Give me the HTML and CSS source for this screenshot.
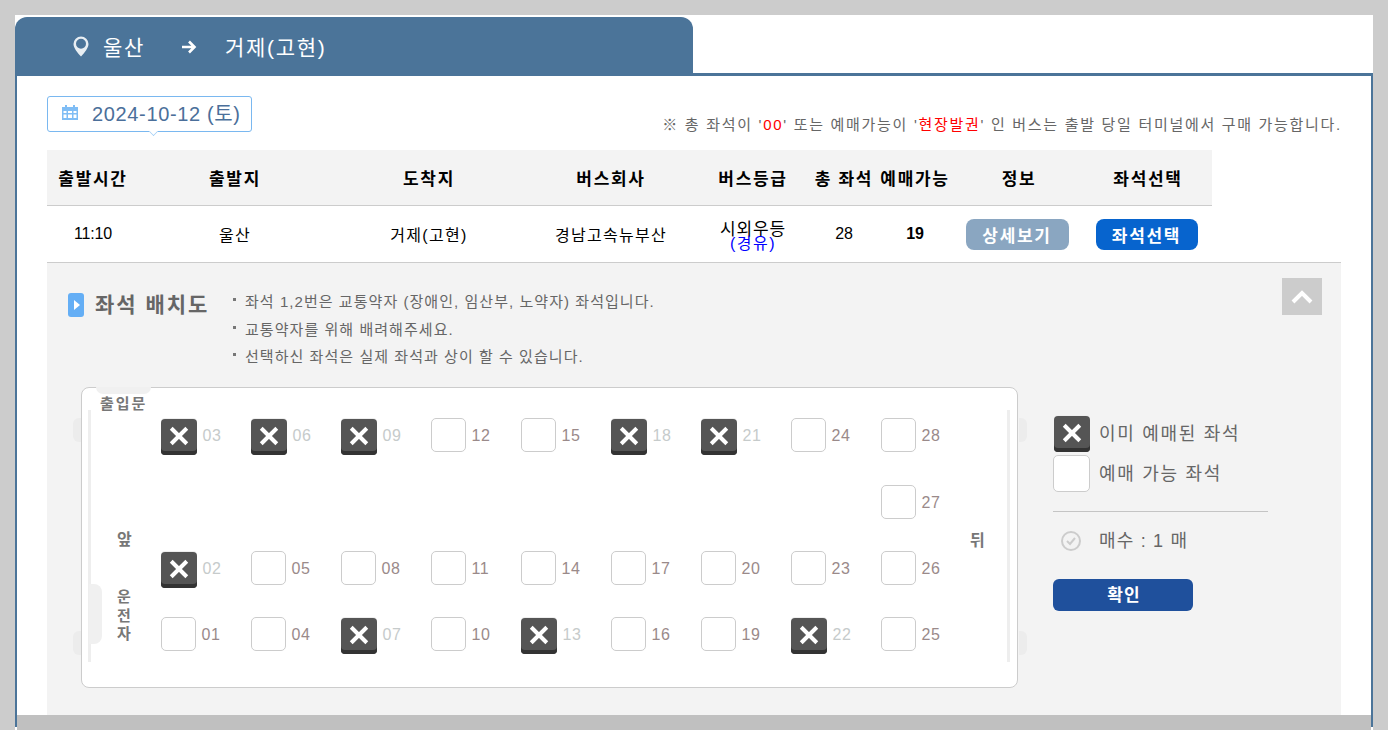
FILE: index.html
```html
<!DOCTYPE html>
<html lang="ko">
<head>
<meta charset="utf-8">
<title>좌석 선택</title>
<link rel="stylesheet" href="styles.css">
</head>
<body>
<div class="wrap">
  <div class="tab">
    <svg class="pin" viewBox="0 0 16 21" width="16" height="21"><path d="M8 .5a7.500 7.500 0 0 0-7.500 7.500c0 3.800 3.800 8.500 7.500 12.500 3.700-4 7.500-8.700 7.500-12.500A7.500 7.500 0 0 0 8 .5zm0 2.300a5 5 0 1 1 0 10 5 5 0 0 1 0-10z" fill="#e8eef3" fill-rule="evenodd"/></svg>
    <span class="tab-from">울산</span>
    <svg class="arrow" viewBox="0 0 15 14" width="15" height="14"><path d="M0 7h12.500M7 1.500L12.500 7 7 12.500" fill="none" stroke="#fff" stroke-width="2.600"/></svg>
    <span>거제(고현)</span>
  </div>
  <div class="panel">
    <div class="date-row">
      <div class="date">
        <svg class="cal" viewBox="0 0 16 16" width="16" height="16"><path d="M0 3h3V1h2v2h6V1h2v2h3v13H0zM1.500 7v2h3V7zm4.500 0v2h4V7zm5.500 0v2h3V7zm-10 3.500v3.500h3v-3.500zm4.500 0v3.500h4v-3.500zm5.500 0v3.500h3v-3.500z" fill="#7fbdf5" fill-rule="evenodd"/></svg>
        <span>2024-10-12 (토)</span>
      </div>
      <p class="note">※ 총 좌석이 '<em>00</em>' 또는 예매가능이 '<em>현장발권</em>' 인 버스는 출발 당일 터미널에서 구매 가능합니다.</p>
    </div>
    <div class="thead">
      <span>출발시간</span><span>출발지</span><span>도착지</span><span>버스회사</span><span>버스등급</span><span>총 좌석</span><span>예매가능</span><span>정보</span><span>좌석선택</span>
    </div>
    <div class="trow">
      <span class="num">11:10</span><span>울산</span><span>거제(고현)</span><span>경남고속뉴부산</span>
      <span class="grade">시외우등<b>(경유)</b></span>
      <span class="num">28</span><strong class="num">19</strong>
      <span><button class="btn btn-info">상세보기</button></span>
      <span><button class="btn btn-pick">좌석선택</button></span>
    </div>
    <div class="detail">
      <button class="up" aria-label="접기"><svg viewBox="0 0 22 14" width="22" height="14"><path d="M2 12l9-9 9 9" fill="none" stroke="#fff" stroke-width="4"/></svg></button>
      <div class="detail-head">
        <div class="h-icon"></div>
        <h2>좌석 배치도</h2>
        <ul>
          <li>좌석 1,2번은 교통약자 (장애인, 임산부, 노약자) 좌석입니다.</li>
          <li>교통약자를 위해 배려해주세요.</li>
          <li>선택하신 좌석은 실제 좌석과 상이 할 수 있습니다.</li>
        </ul>
      </div>
      <div class="detail-body">
        <div class="bus">
          <i class="door"></i>
          <i class="wheel wl wt"></i><i class="wheel wl wb"></i><i class="wheel wr wt"></i><i class="wheel wr wb"></i>
          <i class="rail rl"></i><i class="rail rr"></i>
          <i class="driver"></i>
          <span class="lab lab-door">출입문</span>
          <span class="lab lab-front">앞</span>
          <span class="lab lab-driver">운<br>전<br>자</span>
          <span class="lab lab-back">뒤</span>
          <div class="seats">
            <div class="seat off"><i class="x"></i><span>03</span></div>
            <div class="seat off"><i class="x"></i><span>06</span></div>
            <div class="seat off"><i class="x"></i><span>09</span></div>
            <div class="seat"><i class="box"></i><span>12</span></div>
            <div class="seat"><i class="box"></i><span>15</span></div>
            <div class="seat off"><i class="x"></i><span>18</span></div>
            <div class="seat off"><i class="x"></i><span>21</span></div>
            <div class="seat"><i class="box"></i><span>24</span></div>
            <div class="seat"><i class="box"></i><span>28</span></div>

            <i class="aisle"></i>
            <div class="seat"><i class="box"></i><span>27</span></div>

            <div class="seat off"><i class="x"></i><span>02</span></div>
            <div class="seat"><i class="box"></i><span>05</span></div>
            <div class="seat"><i class="box"></i><span>08</span></div>
            <div class="seat"><i class="box"></i><span>11</span></div>
            <div class="seat"><i class="box"></i><span>14</span></div>
            <div class="seat"><i class="box"></i><span>17</span></div>
            <div class="seat"><i class="box"></i><span>20</span></div>
            <div class="seat"><i class="box"></i><span>23</span></div>
            <div class="seat"><i class="box"></i><span>26</span></div>

            <div class="seat"><i class="box"></i><span>01</span></div>
            <div class="seat"><i class="box"></i><span>04</span></div>
            <div class="seat off"><i class="x"></i><span>07</span></div>
            <div class="seat"><i class="box"></i><span>10</span></div>
            <div class="seat off"><i class="x"></i><span>13</span></div>
            <div class="seat"><i class="box"></i><span>16</span></div>
            <div class="seat"><i class="box"></i><span>19</span></div>
            <div class="seat off"><i class="x"></i><span>22</span></div>
            <div class="seat"><i class="box"></i><span>25</span></div>
          </div>
        </div>
        <div class="legend">
          <div class="leg-row"><i class="x"></i><span>이미 예매된 좌석</span></div>
          <div class="leg-row leg-free"><i class="box"></i><span>예매 가능 좌석</span></div>
          <div class="count">
            <svg viewBox="0 0 22 22" width="22" height="22"><circle cx="11" cy="11" r="9" fill="none" stroke="#ccc" stroke-width="2"/><path d="M7 11l3 3 5-6" fill="none" stroke="#ccc" stroke-width="2"/></svg>
            <span>매수 : 1 매</span>
          </div>
          <button class="ok">확인</button>
        </div>
      </div>
    </div>
    <div class="band"></div>
  </div>
</div>
</body>
</html>
```
FILE: styles.css
```css
* { box-sizing: border-box; }
html, body { margin: 0; height: 730px; overflow: hidden; }
body {
  background: #cccccc;
  padding: 15px 15px 0;
  font-family: "Liberation Sans", "Noto Sans CJK KR", sans-serif;
  color: #000;
}
i, em { font-style: normal; }
button { font-family: inherit; border: 0; padding: 0; cursor: pointer; }

.wrap { width: 1358px; height: 715px; background: #fff; padding-top: 2px; overflow: hidden; }

.tab {
  width: 678px; height: 59px;
  margin-bottom: -3px;
  position: relative; z-index: 1;
  display: flex; align-items: center;
  padding: 0 0 2px 58px;
  background: #4b7499;
  border-radius: 12px 12px 0 0;
  color: #fff; font-size: 21px; letter-spacing: 1.700px;
}
.tab .pin { margin-right: 14px; margin-top: 1px; }
.tab .arrow { margin: 2px 28px 0 37px; }

.panel {
  height: 654px;
  border: solid #4b7499; border-width: 3px 2px 0 2px;
  padding: 20px 30px 0 30px;
}

.date-row { display: flex; justify-content: space-between; align-items: flex-end; margin-bottom: 18px; }
.date {
  position: relative;
  width: 205px; height: 36px;
  display: flex; align-items: center; gap: 14px;
  padding: 0 0 4px 14px;
  border: 1.500px solid #7ab8f0; border-radius: 3px;
  color: #4b6f9a; font-size: 20px; letter-spacing: .65px;
}
.date::after {
  content: ""; position: absolute; left: 101px; bottom: -5px;
  width: 8px; height: 8px; background: #fff;
  border: solid #9ccbf5; border-width: 0 1px 1px 0;
  transform: rotate(45deg) scale(.7);
}
.note {
  margin: 0 -1px 0 0; line-height: 14px;
  font-size: 15px; color: #666; letter-spacing: 1.700px;
}
.note em { color: #f00; }

.thead, .trow {
  display: grid;
  grid-template-columns: 90px 194px 194px 170px 114px 68px 74px 134px 124px;
  align-items: center; text-align: center;
}
.thead {
  width: 1165px; height: 56px; padding-left: 1px;
  background: #f3f3f3; border-bottom: 1px solid #ccc;
  font-size: 17px; font-weight: 700; letter-spacing: 1.700px;
}
.trow { height: 57px; padding: 0 0 1px 1px; border-bottom: 1px solid #ccc; font-size: 16px; letter-spacing: 1.300px; }
.trow .num { padding-top: 1px; font-size: 16px; letter-spacing: -.2px; }
.grade { padding-top: 3px; line-height: 15px; font-size: 17px; letter-spacing: .9px; }
.grade b { display: block; margin-top: 1px; font-weight: 400; color: #00f; font-size: 16px; letter-spacing: 1.500px; line-height: 11px; }

.btn {
  width: 103px; height: 31px; margin: 1px 0 0 -4px;
  border-radius: 8px;
  color: #fff; font-size: 17px; font-weight: 700; letter-spacing: 1.700px;
}
.btn-info { background: #8aa6c1; }
.btn-pick { background: #0764ce; width: 102px; margin-left: -3px; }

.detail { position: relative; height: 452px; background: #f3f3f3; padding-top: 25px; }
.up {
  position: absolute; top: 15px; right: 19px;
  width: 40px; height: 37px;
  display: flex; align-items: center; justify-content: center;
  background: #ccc;
}
.detail-head { display: flex; height: 99px; padding-left: 21px; }
.h-icon {
  position: relative;
  width: 16px; height: 24px; margin-top: 5px;
  background: #64aef5; border-radius: 3px;
}
.h-icon::after {
  content: ""; position: absolute; left: 6px; top: 7px;
  border: solid transparent; border-width: 5px 0 5px 6px; border-left-color: #fff;
}
h2 { margin: 2px 0 0 11px; width: 150px; font-size: 21px; line-height: 30px; color: #666; letter-spacing: 2px; }
ul { margin: 0; padding: 0; list-style: none; color: #666; font-size: 15px; letter-spacing: 1.050px; line-height: 27.500px; }
li { position: relative; }
li::before {
  content: ""; position: absolute; left: -12px; top: 10px;
  width: 3px; height: 3px; background: #777;
}

.detail-body { display: flex; padding-left: 34px; }
.bus {
  position: relative;
  width: 937px; height: 301px;
  background: #fff; border: 1.500px solid #ccc; border-radius: 8px;
  padding: 29.500px 0 0 78.500px;
}
.door { position: absolute; left: 14px; top: -1.500px; width: 55px; height: 7px; background: #f0f0f0; border-radius: 0 0 12px 12px; }
.wheel { position: absolute; width: 8px; height: 24px; background: #ececec; }
.wl { left: -9.500px; border-radius: 6px 0 0 6px; }
.wr { right: -9.500px; border-radius: 0 6px 6px 0; }
.wt { top: 30px; }
.wb { top: 243px; }
.rail { position: absolute; top: 22px; width: 3px; height: 252px; background: #eee; }
.rl { left: 6px; }
.rr { right: 7px; }
.driver { position: absolute; left: 7px; top: 196px; width: 13px; height: 60px; background: #f0f0f0; border-radius: 0 8px 8px 0; }
.lab { position: absolute; color: #777; font-size: 15px; font-weight: 700; line-height: 18px; letter-spacing: 2px; }
.lab-door { left: 18px; top: 7px; }
.lab-front { left: 35px; top: 143px; font-size: 16px; }
.lab-driver { left: 35px; top: 200px; text-align: center; line-height: 18.500px; }
.lab-back { left: 888px; top: 144px; font-size: 16px; }

.seats {
  display: grid;
  grid-template-columns: repeat(9, 90px);
  grid-template-rows: 67px 66px 66px 66px;
}
.aisle { grid-column: span 8; }
.seat { display: flex; align-items: flex-start; gap: 6px; }
.seat span { font-size: 16px; line-height: 35px; letter-spacing: .6px; color: #9a8a8a; }
.seat.off span { color: #c6cbcb; }

.box {
  display: block; width: 35px; height: 34px;
  background: #fff; border: 1.500px solid #ccc; border-radius: 5px;
}
.x {
  position: relative; display: block; flex: none;
  width: 36px; height: 36px; margin-top: 1px;
  background: #555; border-radius: 4px;
  box-shadow: inset 0 -4px 0 #333, 0 -1px 0 #eee;
}
.x::before, .x::after {
  content: ""; position: absolute; left: 7px; top: 15px;
  width: 22px; height: 4px; background: #fff;
}
.x::before { transform: rotate(45deg); }
.x::after { transform: rotate(-45deg); }

.legend { width: 215px; margin-left: 35px; padding-top: 29px; color: #666; }
.leg-row { display: flex; align-items: center; gap: 9px; font-size: 18px; letter-spacing: 1.700px; }
.leg-row span { padding-bottom: 4px; }
.leg-row .x { margin: 0 0 0 1px; }
.leg-free { margin-top: 3px; gap: 9px; }
.leg-free .box { width: 37px; height: 37px; }
.count {
  display: flex; align-items: center; gap: 17px;
  height: 59px; margin-top: 19px; padding-left: 7px;
  border-top: 1px solid #c4c4c4;
  font-size: 18px; letter-spacing: 1.200px;
}
.count span { padding-bottom: 4px; }
.ok {
  display: block; width: 140px; height: 32px; margin-top: 9px; padding: 0 0 3px 2px;
  background: #1f509c; border-radius: 6px;
  color: #fff; font-size: 17px; font-weight: 700; letter-spacing: 1px;
}
.band { height: 20px; margin: 0 -30px; background: #c0c0c0; }
```
